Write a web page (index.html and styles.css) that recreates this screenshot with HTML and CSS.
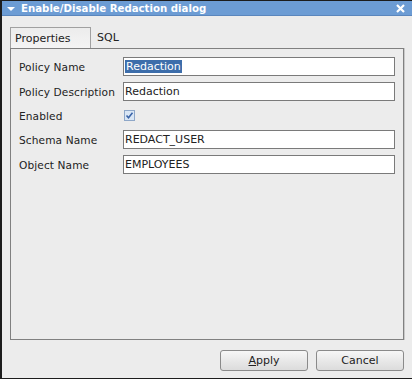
FILE: index.html
```html
<!DOCTYPE html>
<html lang="en">
<head>
  <meta charset="UTF-8">
  <title>Enable/Disable Redaction dialog</title>
  <link rel="stylesheet" href="styles.css">
</head>
<body>
  <div class="dialog">
    <div class="titlebar">
      <span class="tri"></span>
      <span class="title">Enable/Disable Redaction dialog</span>
      <svg class="close" width="9" height="9" viewBox="0 0 9 9"><path d="M1 1 L8 8 M8 1 L1 8" stroke="#fff" stroke-width="2.2"/></svg>
    </div>
    <div class="content">
      <div class="tabs">
        <div class="tab active">Properties</div>
        <div class="tab">SQL</div>
      </div>
      <div class="panel">
        <div class="form">
          <label>Policy Name</label>
          <div class="field"><span class="sel">Redaction</span></div>
          <label>Policy Description</label>
          <div class="field">Redaction</div>
          <label>Enabled</label>
          <div class="check">
            <svg width="11" height="11" viewBox="0 0 11 11"><rect x="0.5" y="0.5" width="10" height="10" fill="#d9e6f5" stroke="#8ea7c8"/><path d="M2.5 5.5 L4.5 7.8 L8.5 2.8" fill="none" stroke="#3a64a8" stroke-width="1.6"/></svg>
          </div>
          <label>Schema Name</label>
          <div class="field">REDACT_USER</div>
          <label>Object Name</label>
          <div class="field">EMPLOYEES</div>
        </div>
      </div>
      <div class="actions">
        <button type="button"><u>A</u>pply</button>
        <button type="button">Cancel</button>
      </div>
    </div>
  </div>
</body>
</html>
```

FILE: styles.css
```css
body { margin: 0; background: #ececec; font-family: "DejaVu Sans", sans-serif; font-size: 11px; color: #222; }
.dialog { width: 410px; height: 377px; border: 1px solid #1c1c1c; border-left-width: 2px; border-bottom-width: 2px; border-right-width: 0; background: #ececec; display: flex; flex-direction: column; }
.titlebar { height: 14px; background: #6c9cd4; border-bottom: 1px solid #5a86bd; display: flex; align-items: center; color: #fff; font-weight: bold; font-size: 10.2px; padding: 0 6px 0 5px; }
.tri { width: 0; height: 0; border-left: 4px solid transparent; border-right: 4px solid transparent; border-top: 4px solid #fff; margin-right: 6px; margin-top: 1px; }
.title { flex: 1; }
.close { margin-right: 1px; }
.content { flex: 1; display: flex; flex-direction: column; padding: 11px 8px 0 8px; }
.tabs { display: flex; height: 21px; }
.tab { padding: 4px 6px 0 6px; color: #222; }
.tab.active { width: 69px; border: 1px solid #a0a0a0; border-bottom: none; background: linear-gradient(#ececec, #f4f4f4); padding-left: 4px; }
.panel { height: 292px; border: 1px solid #808080; box-shadow: 1px 0 0 #c8c8c8; padding: 8px 8px 0 8px; box-sizing: border-box; }
.form { display: grid; grid-template-columns: 104px 1fr; grid-template-rows: 19px 19px 17px 19px 19px; row-gap: 6px; align-items: center; }
label { font-size: 10.6px; letter-spacing: 0.1px; }
.field { height: 19px; box-sizing: border-box; border: 1px solid #7a7a7a; background: #fff; padding: 1px 1px 0 1px; line-height: 15px; }
.sel { background: #3d6eab; color: #fff; padding: 0 1px; }
.check { display: flex; align-items: center; padding-left: 1px; }
.actions { display: flex; justify-content: flex-end; gap: 8px; padding-top: 10px; }
button { width: 88px; height: 21px; font-family: "DejaVu Sans", sans-serif; font-size: 11px; color: #222; border: 1px solid #8a8a8a; border-radius: 3px; background: linear-gradient(#f7f7f7, #e6e6e6 60%, #dcdcdc); padding: 0; }
```
